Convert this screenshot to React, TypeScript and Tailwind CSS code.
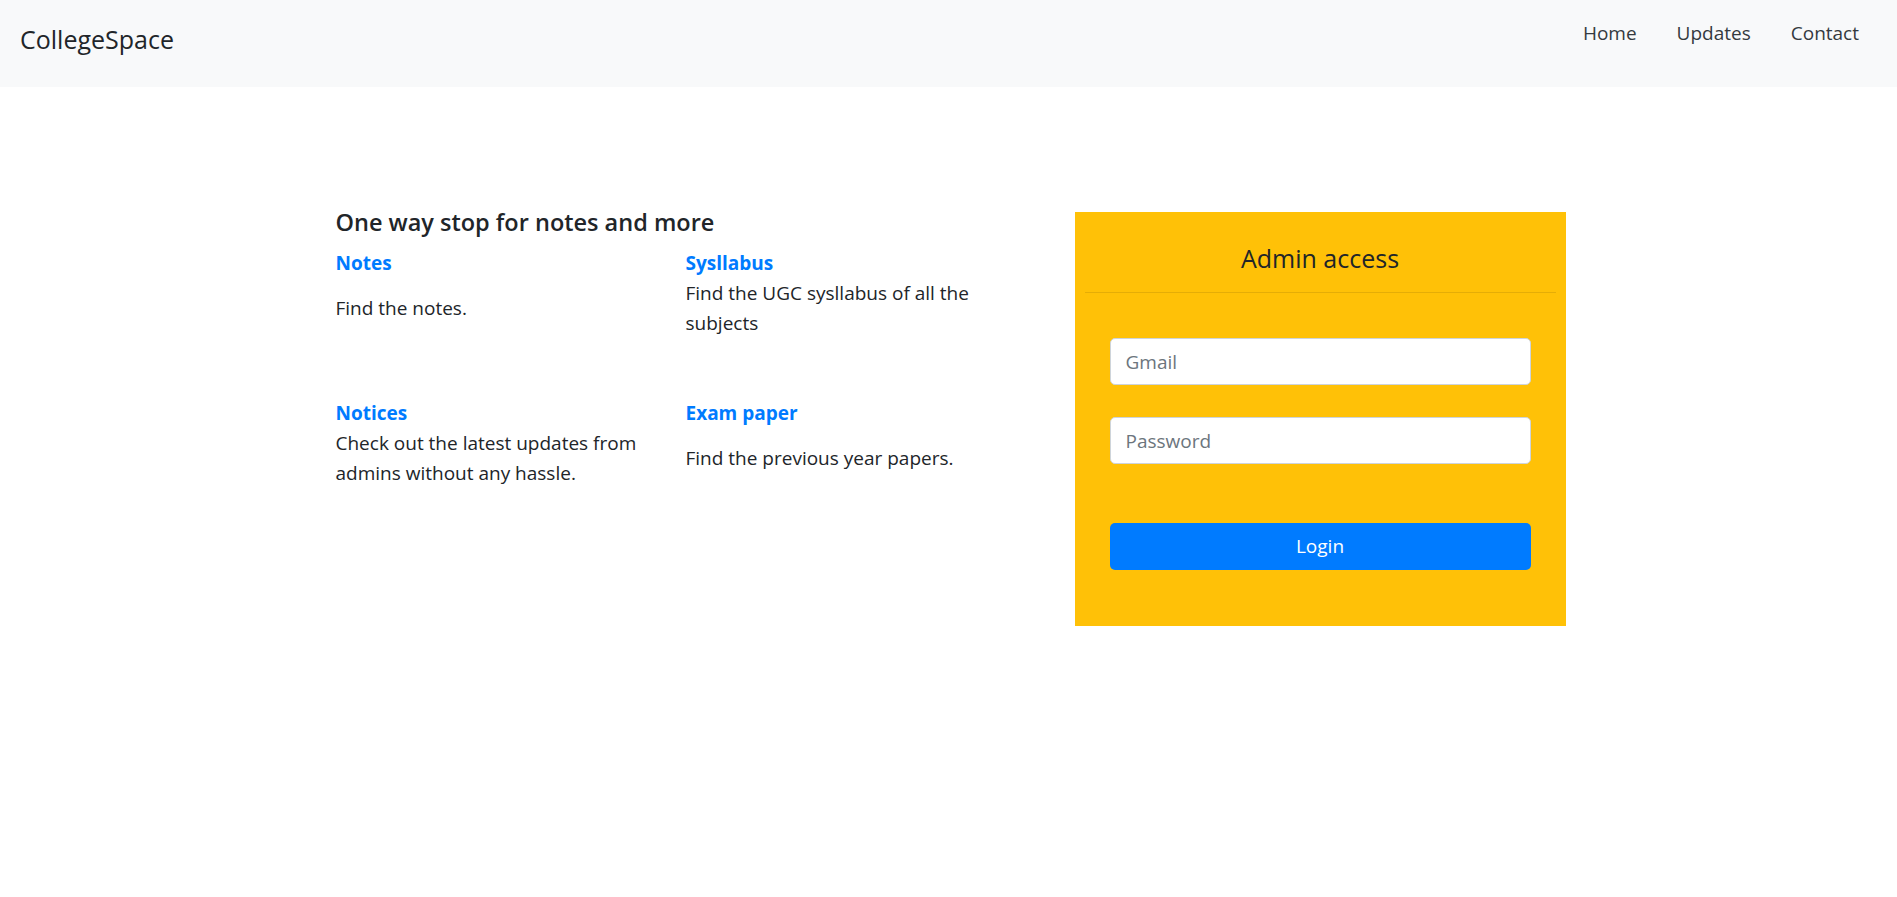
const features = [
  { title: "Notes", text: "Find the notes.", gap: true },
  { title: "Sysllabus", text: "Find the UGC sysllabus of all the subjects", gap: false },
  { title: "Notices", text: "Check out the latest updates from admins without any hassle.", gap: false },
  { title: "Exam paper", text: "Find the previous year papers.", gap: true },
];

function Navbar() {
  return (
    <nav className="h-[87px] bg-[#f8f9fa] flex items-start justify-between pl-5 pr-[18px]">
      <a href="#" className="mt-5 text-[25px] leading-[38px] text-[#212529]">CollegeSpace</a>
      <ul className="flex mt-2">
        {["Home", "Updates", "Contact"].map((l) => (
          <li key={l}>
            <a href="#" className="block px-5 py-[10px] text-[19px] leading-[30px] text-[#343a40]">{l}</a>
          </li>
        ))}
      </ul>
    </nav>
  );
}

function AdminCard() {
  return (
    <div className="w-[491px] mt-[5px] bg-[#ffc107] pt-[31px] pb-[56px]">
      <h4 className="text-center text-[25px] leading-[30px] font-medium text-[#212529]">Admin access</h4>
      <div className="mx-[10px] mt-[19px] h-px bg-black/10" />
      <form className="px-[35px] pt-[45px] flex flex-col">
        <input
          type="email"
          placeholder="Gmail"
          className="h-[47px] rounded-[5px] border border-[#ced4da] bg-white px-[15px] text-[19px] placeholder:text-[#6c757d] outline-none"
        />
        <input
          type="password"
          placeholder="Password"
          className="mt-8 h-[47px] rounded-[5px] border border-[#ced4da] bg-white px-[15px] text-[19px] placeholder:text-[#6c757d] outline-none"
        />
        <button type="button" className="mt-[59px] h-[47px] rounded-[5px] bg-[#007bff] text-white text-[19px]">
          Login
        </button>
      </form>
    </div>
  );
}

export default function App() {
  return (
    <div className="min-h-screen bg-white font-['Open_Sans',sans-serif] text-[#212529]">
      <Navbar />
      <main className="mx-auto w-[1234px] flex justify-between items-start pt-[120px]">
        <section className="pl-1">
          <h5 className="text-[23.5px] leading-[30px] font-semibold mb-[11px]">One way stop for notes and more</h5>
          <div className="grid grid-cols-[350px_350px]">
            {features.map((f) => (
              <div key={f.title} className="h-[150px] pr-[30px]">
                <h6 className="text-[19px] leading-[30px] font-bold text-[#007bff]">{f.title}</h6>
                <p className={`text-[19px] leading-[30px] ${f.gap ? "mt-[15px]" : ""}`}>{f.text}</p>
              </div>
            ))}
          </div>
        </section>
        <AdminCard />
      </main>
    </div>
  );
}
